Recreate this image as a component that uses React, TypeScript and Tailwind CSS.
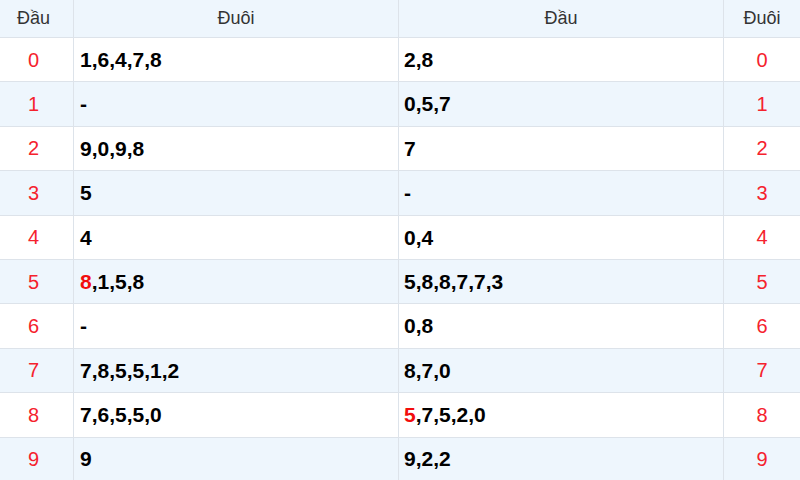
import React from "react";

type Part = { t: string; red?: boolean };
const rows: { d: number; duoi: Part[]; dau: Part[] }[] = [
  { d: 0, duoi: [{ t: "1,6,4,7,8" }], dau: [{ t: "2,8" }] },
  { d: 1, duoi: [{ t: "-" }], dau: [{ t: "0,5,7" }] },
  { d: 2, duoi: [{ t: "9,0,9,8" }], dau: [{ t: "7" }] },
  { d: 3, duoi: [{ t: "5" }], dau: [{ t: "-" }] },
  { d: 4, duoi: [{ t: "4" }], dau: [{ t: "0,4" }] },
  { d: 5, duoi: [{ t: "8", red: true }, { t: ",1,5,8" }], dau: [{ t: "5,8,8,7,7,3" }] },
  { d: 6, duoi: [{ t: "-" }], dau: [{ t: "0,8" }] },
  { d: 7, duoi: [{ t: "7,8,5,5,1,2" }], dau: [{ t: "8,7,0" }] },
  { d: 8, duoi: [{ t: "7,6,5,5,0" }], dau: [{ t: "5", red: true }, { t: ",7,5,2,0" }] },
  { d: 9, duoi: [{ t: "9" }], dau: [{ t: "9,2,2" }] },
];

function Val({ parts }: { parts: Part[] }) {
  return (
    <span className="font-bold text-[21px] text-black">
      {parts.map((p, i) => (
        <span key={i} className={p.red ? "text-[#f20d0d]" : ""}>
          {p.t}
        </span>
      ))}
    </span>
  );
}

export default function App() {
  return (
    <div
      className="w-[800px] h-[480px] overflow-hidden bg-white"
      style={{ fontFamily: '"Liberation Sans", Arial, sans-serif' }}
    >
      <div className="grid grid-cols-[74px_325px_325px_76px] h-[38px] bg-[#eef6fd] border-b border-[#dde3ea] text-[18px] text-[#333]">
        <div className="flex items-center justify-center pr-[6px] border-r border-[#dde3ea]">Đầu</div>
        <div className="flex items-center justify-center border-r border-[#dde3ea]">Đuôi</div>
        <div className="flex items-center justify-center border-r border-[#dde3ea]">Đầu</div>
        <div className="flex items-center justify-center">Đuôi</div>
      </div>
      {rows.map((r, i) => (
        <div
          key={r.d}
          className={`grid grid-cols-[74px_325px_325px_76px] h-[44.4px] border-b border-[#dde3ea] ${
            i % 2 === 1 ? "bg-[#eef6fd]" : "bg-white"
          }`}
        >
          <div className="flex items-center justify-center pr-[6px] border-r border-[#dde3ea] text-[20px] text-[#f5222d]">
            {r.d}
          </div>
          <div className="flex items-center pl-[6px] border-r border-[#dde3ea]">
            <Val parts={r.duoi} />
          </div>
          <div className="flex items-center pl-[5px] border-r border-[#dde3ea]">
            <Val parts={r.dau} />
          </div>
          <div className="flex items-center justify-center text-[20px] text-[#f5222d]">{r.d}</div>
        </div>
      ))}
    </div>
  );
}
